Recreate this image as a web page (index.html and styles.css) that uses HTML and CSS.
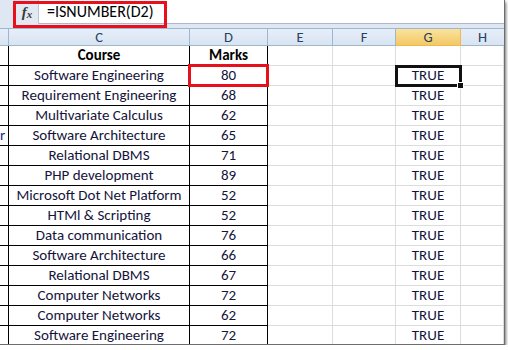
FILE: index.html
```html
<!DOCTYPE html>
<html>
<head>
<meta charset="utf-8">
<link rel="stylesheet" href="styles.css">
</head>
<body>
<div class="window">
  <div class="fbar">
    <div class="fx-btn"><span class="fx-f">f</span><span class="fx-x">x</span></div>
    <div class="fx-input">=ISNUMBER(D2)</div>
    <div class="hl hl-formula"></div>
  </div>
  <div class="sheet">
    <div class="hdr hb"></div>
    <div class="hdr">C</div>
    <div class="hdr">D</div>
    <div class="hdr">E</div>
    <div class="hdr">F</div>
    <div class="hdr hsel">G</div>
    <div class="hdr hlast">H</div>

    <div class="c b"></div><div class="c t th">Course</div><div class="c t th">Marks</div><div class="c g"></div><div class="c g"></div><div class="c g"></div><div class="c g"></div>

    <div class="c b"></div><div class="c t">Software Engineering</div><div class="c t mark">80<div class="hl hl-cell"></div></div><div class="c g"></div><div class="c g"></div><div class="c g v sel">TRUE<div class="handle"></div></div><div class="c g"></div>
    <div class="c b"></div><div class="c t">Requirement Engineering</div><div class="c t">68</div><div class="c g"></div><div class="c g"></div><div class="c g v">TRUE</div><div class="c g"></div>
    <div class="c b"></div><div class="c t">Multivariate Calculus</div><div class="c t">62</div><div class="c g"></div><div class="c g"></div><div class="c g v">TRUE</div><div class="c g"></div>
    <div class="c b bo">r</div><div class="c t">Software Architecture</div><div class="c t">65</div><div class="c g"></div><div class="c g"></div><div class="c g v">TRUE</div><div class="c g"></div>
    <div class="c b"></div><div class="c t">Relational DBMS</div><div class="c t">71</div><div class="c g"></div><div class="c g"></div><div class="c g v">TRUE</div><div class="c g"></div>
    <div class="c b"></div><div class="c t">PHP development</div><div class="c t">89</div><div class="c g"></div><div class="c g"></div><div class="c g v">TRUE</div><div class="c g"></div>
    <div class="c b"></div><div class="c t">Microsoft Dot Net Platform</div><div class="c t">52</div><div class="c g"></div><div class="c g"></div><div class="c g v">TRUE</div><div class="c g"></div>
    <div class="c b"></div><div class="c t">HTMl &amp; Scripting</div><div class="c t">52</div><div class="c g"></div><div class="c g"></div><div class="c g v">TRUE</div><div class="c g"></div>
    <div class="c b"></div><div class="c t">Data communication</div><div class="c t">76</div><div class="c g"></div><div class="c g"></div><div class="c g v">TRUE</div><div class="c g"></div>
    <div class="c b"></div><div class="c t">Software Architecture</div><div class="c t">66</div><div class="c g"></div><div class="c g"></div><div class="c g v">TRUE</div><div class="c g"></div>
    <div class="c b"></div><div class="c t">Relational DBMS</div><div class="c t">67</div><div class="c g"></div><div class="c g"></div><div class="c g v">TRUE</div><div class="c g"></div>
    <div class="c b"></div><div class="c t">Computer Networks</div><div class="c t">72</div><div class="c g"></div><div class="c g"></div><div class="c g v">TRUE</div><div class="c g"></div>
    <div class="c b"></div><div class="c t">Computer Networks</div><div class="c t">62</div><div class="c g"></div><div class="c g"></div><div class="c g v">TRUE</div><div class="c g"></div>
    <div class="c b"></div><div class="c t">Software Engineering</div><div class="c t">72</div><div class="c g"></div><div class="c g"></div><div class="c g v">TRUE</div><div class="c g"></div>
  </div>
</div>
</body>
</html>
```

FILE: styles.css
```css
html, body {
  margin: 0;
  padding: 0;
  background: #ffffff;
}
.window {
  width: 505px;
  height: 345px;
  overflow: hidden;
  background: #ffffff;
  border-right: 1px solid #6d6d6d;
  border-bottom: 1px solid #6d6d6d;
  box-sizing: border-box;
  box-shadow: 1px 2px 3px rgba(0,0,0,0.55);
  font-family: Carlito, Lato, "Liberation Sans", sans-serif;
  color: #14143c;
}
.fbar {
  position: relative;
  display: flex;
  height: 28px;
  background: #dfe7f2;
  padding-left: 16px;
}
.fx-btn {
  width: 22px;
  height: 24px;
  border-right: 1px solid #b8c5d6;
  display: flex;
  align-items: center;
  justify-content: center;
  font-family: "Liberation Serif", serif;
  font-style: italic;
  color: #3a3a3a;
  background: #e3e9f2;
}
.fx-f {
  font-size: 15px;
  font-weight: bold;
}
.fx-x {
  font-size: 11px;
  font-weight: bold;
  margin-top: 4px;
}
.fx-input {
  flex: 1;
  height: 23px;
  background: #ffffff;
  border-bottom: 1px solid #a9b8cc;
  font-size: 16px;
  line-height: 24px;
  padding-left: 8px;
  color: #000;
}
.hl {
  position: absolute;
  border: 3px solid #e8101c;
  box-sizing: border-box;
  pointer-events: none;
}
.hl-formula {
  left: 13px;
  top: 1px;
  width: 154px;
  height: 27px;
}
.sheet {
  display: grid;
  grid-template-columns: 9px 181px 78px 65px 63px 65px 1fr;
  grid-auto-rows: 20px;
  grid-template-rows: 17px;
  border-top: 1px solid #9eb6ce;
}
.hdr {
  background: linear-gradient(#e6eef8, #d9e4f2);
  border-right: 1px solid #9eb6ce;
  border-bottom: 1px solid #9eb6ce;
  font-size: 14.5px;
  line-height: 16px;
  text-align: center;
  color: #27415f;
}
.hdr.hsel {
  background: linear-gradient(#fae39e, #f3c865);
  border-right-color: #f2b84b;
  border-bottom-color: #f2b84b;
}
.hdr.hlast {
  border-right: none;
}
.c {
  font-size: 15px;
  line-height: 19px;
  text-align: center;
  white-space: nowrap;
}
.b {
  border-right: 1px solid #000;
  border-bottom: 1px solid #000;
}
.bo {
  text-align: right;
  padding-right: 4px;
  color: #1a2a8a;
  overflow: hidden;
}
.t {
  border-right: 1px solid #000;
  border-bottom: 1px solid #000;
}
.th {
  font-weight: bold;
  color: #000;
}
.g {
  border-right: 1px solid #dadcdd;
  border-bottom: 1px solid #dadcdd;
}
.mark {
  position: relative;
}
.hl-cell {
  left: -2px;
  top: -2px;
  width: 81px;
  height: 23px;
}
.sel {
  position: relative;
  outline: 3px solid #111;
  outline-offset: -2px;
}
.handle {
  position: absolute;
  right: -4px;
  bottom: -4px;
  width: 5px;
  height: 5px;
  background: #111;
  border: 1px solid #fff;
}
```
